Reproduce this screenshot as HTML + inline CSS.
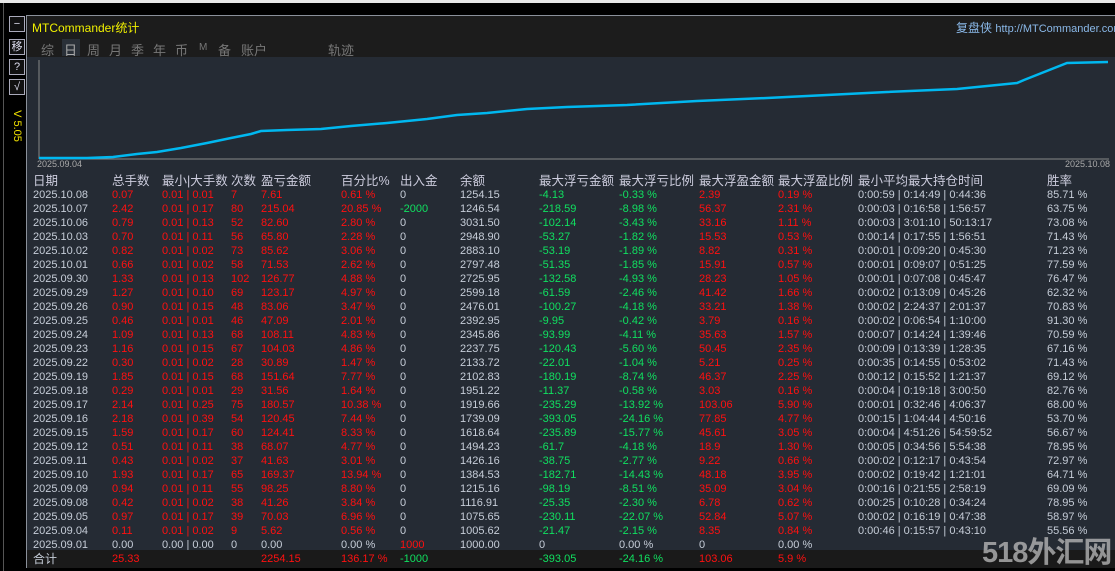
<!DOCTYPE html>
<html><head><meta charset="utf-8"><style>
body{margin:0;width:1115px;height:571px;background:#000;position:relative;overflow:hidden;font-family:"Liberation Sans","Noto Sans CJK SC",sans-serif;}
.topbar{position:absolute;left:0;top:0;width:1115px;height:3px;background:#e8e8e8}
.lline{position:absolute;left:3px;top:3px;width:1px;height:568px;background:#555}
.panel{position:absolute;left:26px;top:15px;width:1089px;height:552px;border-top:1px solid #8a909a;border-left:1px solid #8a909a;background:#252b34}
.title{position:absolute;left:0;top:0;width:1089px;height:41px;background:#1c1c1c}
.btn{position:absolute;left:9px;width:14px;height:14px;border:1px solid #aab;color:#dde;font-size:11px;line-height:14px;text-align:center;background:#111}
.t{position:absolute;white-space:nowrap}
.nv{position:absolute;top:24px;color:#777;font-size:13px;white-space:nowrap}
.row{position:absolute;left:0;height:14px;font-size:11px;line-height:14px;color:#c6cdd8;width:1089px}
.row span{position:absolute;white-space:nowrap}
.r{color:#ff1010}.g{color:#10e060}
.a{left:6px}.b{left:85px}.c{left:135px}.d{left:204px}.e{left:234px}.f{left:314px}.h{left:373px}.i{left:433px}.j{left:512px}.k{left:592px}.l{left:672px}.m{left:751px}.n{left:831px}.o{left:1020px}
.hd{font-size:12.5px;color:#ccd}
</style></head><body>
<div class="topbar"></div>
<div class="lline"></div>
<div class="btn" style="top:16px">−</div>
<div class="btn" style="top:39px">移</div>
<div class="btn" style="top:59px">?</div>
<div class="btn" style="top:79px">√</div>
<div class="t" style="left:1px;top:120px;color:#f0e000;font-size:11px;transform:rotate(90deg);transform-origin:center">V 5.05</div>
<div class="panel">
<div class="title"></div>
<div class="t" style="left:5px;top:3px;color:#f0f000;font-size:12px">MTCommander统计</div>
<div class="t" style="left:929px;top:3px;color:#8ab8e8;font-size:12px">复盘侠 <span style="font-size:11px">http://MTCommander.com</span></div>
<div class="t" style="left:35px;top:23px;width:18px;height:17px;background:#2a3038"></div>
<div class="nv" style="left:14px">综</div>
<div class="nv" style="left:37px;color:#aaa">日</div>
<div class="nv" style="left:60px">周</div>
<div class="nv" style="left:82px">月</div>
<div class="nv" style="left:104px">季</div>
<div class="nv" style="left:126px">年</div>
<div class="nv" style="left:148px">币</div>
<div class="nv" style="left:172px;font-size:10px;top:26px">M</div>
<div class="nv" style="left:191px">备</div>
<div class="nv" style="left:214px">账户</div>
<div class="nv" style="left:301px">轨迹</div>
<svg class="t" style="left:0;top:41px" width="1089" height="120">
<line x1="12" y1="3" x2="12" y2="102" stroke="#888" stroke-width="1"/>
<line x1="12" y1="102" x2="1082" y2="102" stroke="#888" stroke-width="1"/>
<polyline fill="none" stroke="#00b8f0" stroke-width="2.5" points="12,101 60,101 86,100 110,97 130,95 154,91 180,86 204,81 224,77 234,74 260,73 294,72 324,69 360,66 400,62 430,58 460,56 500,52 540,50 600,48 670,44 740,41 800,38 860,35 930,32 990,26 997,23 1040,6 1081,5"/>
</svg>
<div class="t" style="left:10px;top:143px;color:#aaa;font-size:9px">2025.09.04</div>
<div class="t" style="left:1038px;top:143px;color:#aaa;font-size:9px">2025.10.08</div>
<div class="row hd" style="top:158px"><span class="a">日期</span><span class="b">总手数</span><span class="c">最小|大手数</span><span class="d">次数</span><span class="e">盈亏金额</span><span class="f">百分比%</span><span class="h">出入金</span><span class="i">余额</span><span class="j">最大浮亏金额</span><span class="k">最大浮亏比例</span><span class="l">最大浮盈金额</span><span class="m">最大浮盈比例</span><span class="n">最小平均最大持仓时间</span><span class="o">胜率</span></div>

<div class="row" style="top:172px"><span class="a">2025.10.08</span><span class="b r">0.07</span><span class="c r">0.01 | 0.01</span><span class="d r">7</span><span class="e r">7.61</span><span class="f r">0.61 %</span><span class="h">0</span><span class="i">1254.15</span><span class="j g">-4.13</span><span class="k g">-0.33 %</span><span class="l r">2.39</span><span class="m r">0.19 %</span><span class="n">0:00:59 | 0:14:49 | 0:44:36</span><span class="o">85.71 %</span></div>
<div class="row" style="top:186px"><span class="a">2025.10.07</span><span class="b r">2.42</span><span class="c r">0.01 | 0.17</span><span class="d r">80</span><span class="e r">215.04</span><span class="f r">20.85 %</span><span class="h g">-2000</span><span class="i">1246.54</span><span class="j g">-218.59</span><span class="k g">-8.98 %</span><span class="l r">56.37</span><span class="m r">2.31 %</span><span class="n">0:00:03 | 0:16:58 | 1:56:57</span><span class="o">63.75 %</span></div>
<div class="row" style="top:200px"><span class="a">2025.10.06</span><span class="b r">0.79</span><span class="c r">0.01 | 0.13</span><span class="d r">52</span><span class="e r">82.60</span><span class="f r">2.80 %</span><span class="h">0</span><span class="i">3031.50</span><span class="j g">-102.14</span><span class="k g">-3.43 %</span><span class="l r">33.16</span><span class="m r">1.11 %</span><span class="n">0:00:03 | 3:01:10 | 50:13:17</span><span class="o">73.08 %</span></div>
<div class="row" style="top:214px"><span class="a">2025.10.03</span><span class="b r">0.70</span><span class="c r">0.01 | 0.11</span><span class="d r">56</span><span class="e r">65.80</span><span class="f r">2.28 %</span><span class="h">0</span><span class="i">2948.90</span><span class="j g">-53.27</span><span class="k g">-1.82 %</span><span class="l r">15.53</span><span class="m r">0.53 %</span><span class="n">0:00:14 | 0:17:55 | 1:56:51</span><span class="o">71.43 %</span></div>
<div class="row" style="top:228px"><span class="a">2025.10.02</span><span class="b r">0.82</span><span class="c r">0.01 | 0.02</span><span class="d r">73</span><span class="e r">85.62</span><span class="f r">3.06 %</span><span class="h">0</span><span class="i">2883.10</span><span class="j g">-53.19</span><span class="k g">-1.89 %</span><span class="l r">8.82</span><span class="m r">0.31 %</span><span class="n">0:00:01 | 0:09:20 | 0:45:30</span><span class="o">71.23 %</span></div>
<div class="row" style="top:242px"><span class="a">2025.10.01</span><span class="b r">0.66</span><span class="c r">0.01 | 0.02</span><span class="d r">58</span><span class="e r">71.53</span><span class="f r">2.62 %</span><span class="h">0</span><span class="i">2797.48</span><span class="j g">-51.35</span><span class="k g">-1.85 %</span><span class="l r">15.91</span><span class="m r">0.57 %</span><span class="n">0:00:01 | 0:09:07 | 0:51:25</span><span class="o">77.59 %</span></div>
<div class="row" style="top:256px"><span class="a">2025.09.30</span><span class="b r">1.33</span><span class="c r">0.01 | 0.13</span><span class="d r">102</span><span class="e r">126.77</span><span class="f r">4.88 %</span><span class="h">0</span><span class="i">2725.95</span><span class="j g">-132.58</span><span class="k g">-4.93 %</span><span class="l r">28.23</span><span class="m r">1.05 %</span><span class="n">0:00:01 | 0:07:08 | 0:45:47</span><span class="o">76.47 %</span></div>
<div class="row" style="top:270px"><span class="a">2025.09.29</span><span class="b r">1.27</span><span class="c r">0.01 | 0.10</span><span class="d r">69</span><span class="e r">123.17</span><span class="f r">4.97 %</span><span class="h">0</span><span class="i">2599.18</span><span class="j g">-61.59</span><span class="k g">-2.46 %</span><span class="l r">41.42</span><span class="m r">1.66 %</span><span class="n">0:00:02 | 0:13:09 | 0:45:26</span><span class="o">62.32 %</span></div>
<div class="row" style="top:284px"><span class="a">2025.09.26</span><span class="b r">0.90</span><span class="c r">0.01 | 0.15</span><span class="d r">48</span><span class="e r">83.06</span><span class="f r">3.47 %</span><span class="h">0</span><span class="i">2476.01</span><span class="j g">-100.27</span><span class="k g">-4.18 %</span><span class="l r">33.21</span><span class="m r">1.38 %</span><span class="n">0:00:02 | 2:24:37 | 2:01:37</span><span class="o">70.83 %</span></div>
<div class="row" style="top:298px"><span class="a">2025.09.25</span><span class="b r">0.46</span><span class="c r">0.01 | 0.01</span><span class="d r">46</span><span class="e r">47.09</span><span class="f r">2.01 %</span><span class="h">0</span><span class="i">2392.95</span><span class="j g">-9.95</span><span class="k g">-0.42 %</span><span class="l r">3.79</span><span class="m r">0.16 %</span><span class="n">0:00:02 | 0:06:54 | 1:10:00</span><span class="o">91.30 %</span></div>
<div class="row" style="top:312px"><span class="a">2025.09.24</span><span class="b r">1.09</span><span class="c r">0.01 | 0.13</span><span class="d r">68</span><span class="e r">108.11</span><span class="f r">4.83 %</span><span class="h">0</span><span class="i">2345.86</span><span class="j g">-93.99</span><span class="k g">-4.11 %</span><span class="l r">35.63</span><span class="m r">1.57 %</span><span class="n">0:00:07 | 0:14:24 | 1:39:46</span><span class="o">70.59 %</span></div>
<div class="row" style="top:326px"><span class="a">2025.09.23</span><span class="b r">1.16</span><span class="c r">0.01 | 0.15</span><span class="d r">67</span><span class="e r">104.03</span><span class="f r">4.86 %</span><span class="h">0</span><span class="i">2237.75</span><span class="j g">-120.43</span><span class="k g">-5.60 %</span><span class="l r">50.45</span><span class="m r">2.35 %</span><span class="n">0:00:09 | 0:13:39 | 1:28:35</span><span class="o">67.16 %</span></div>
<div class="row" style="top:340px"><span class="a">2025.09.22</span><span class="b r">0.30</span><span class="c r">0.01 | 0.02</span><span class="d r">28</span><span class="e r">30.89</span><span class="f r">1.47 %</span><span class="h">0</span><span class="i">2133.72</span><span class="j g">-22.01</span><span class="k g">-1.04 %</span><span class="l r">5.21</span><span class="m r">0.25 %</span><span class="n">0:00:35 | 0:14:55 | 0:53:02</span><span class="o">71.43 %</span></div>
<div class="row" style="top:354px"><span class="a">2025.09.19</span><span class="b r">1.85</span><span class="c r">0.01 | 0.15</span><span class="d r">68</span><span class="e r">151.64</span><span class="f r">7.77 %</span><span class="h">0</span><span class="i">2102.83</span><span class="j g">-180.19</span><span class="k g">-8.74 %</span><span class="l r">46.37</span><span class="m r">2.25 %</span><span class="n">0:00:12 | 0:15:52 | 1:21:37</span><span class="o">69.12 %</span></div>
<div class="row" style="top:368px"><span class="a">2025.09.18</span><span class="b r">0.29</span><span class="c r">0.01 | 0.01</span><span class="d r">29</span><span class="e r">31.56</span><span class="f r">1.64 %</span><span class="h">0</span><span class="i">1951.22</span><span class="j g">-11.37</span><span class="k g">-0.58 %</span><span class="l r">3.03</span><span class="m r">0.16 %</span><span class="n">0:00:04 | 0:19:18 | 3:00:50</span><span class="o">82.76 %</span></div>
<div class="row" style="top:382px"><span class="a">2025.09.17</span><span class="b r">2.14</span><span class="c r">0.01 | 0.25</span><span class="d r">75</span><span class="e r">180.57</span><span class="f r">10.38 %</span><span class="h">0</span><span class="i">1919.66</span><span class="j g">-235.29</span><span class="k g">-13.92 %</span><span class="l r">103.06</span><span class="m r">5.90 %</span><span class="n">0:00:01 | 0:32:46 | 4:06:37</span><span class="o">68.00 %</span></div>
<div class="row" style="top:396px"><span class="a">2025.09.16</span><span class="b r">2.18</span><span class="c r">0.01 | 0.39</span><span class="d r">54</span><span class="e r">120.45</span><span class="f r">7.44 %</span><span class="h">0</span><span class="i">1739.09</span><span class="j g">-393.05</span><span class="k g">-24.16 %</span><span class="l r">77.85</span><span class="m r">4.77 %</span><span class="n">0:00:15 | 1:04:44 | 4:50:16</span><span class="o">53.70 %</span></div>
<div class="row" style="top:410px"><span class="a">2025.09.15</span><span class="b r">1.59</span><span class="c r">0.01 | 0.17</span><span class="d r">60</span><span class="e r">124.41</span><span class="f r">8.33 %</span><span class="h">0</span><span class="i">1618.64</span><span class="j g">-235.89</span><span class="k g">-15.77 %</span><span class="l r">45.61</span><span class="m r">3.05 %</span><span class="n">0:00:04 | 4:51:26 | 54:59:52</span><span class="o">56.67 %</span></div>
<div class="row" style="top:424px"><span class="a">2025.09.12</span><span class="b r">0.51</span><span class="c r">0.01 | 0.11</span><span class="d r">38</span><span class="e r">68.07</span><span class="f r">4.77 %</span><span class="h">0</span><span class="i">1494.23</span><span class="j g">-61.7</span><span class="k g">-4.18 %</span><span class="l r">18.9</span><span class="m r">1.30 %</span><span class="n">0:00:05 | 0:34:56 | 5:54:38</span><span class="o">78.95 %</span></div>
<div class="row" style="top:438px"><span class="a">2025.09.11</span><span class="b r">0.43</span><span class="c r">0.01 | 0.02</span><span class="d r">37</span><span class="e r">41.63</span><span class="f r">3.01 %</span><span class="h">0</span><span class="i">1426.16</span><span class="j g">-38.75</span><span class="k g">-2.77 %</span><span class="l r">9.22</span><span class="m r">0.66 %</span><span class="n">0:00:02 | 0:12:17 | 0:43:54</span><span class="o">72.97 %</span></div>
<div class="row" style="top:452px"><span class="a">2025.09.10</span><span class="b r">1.93</span><span class="c r">0.01 | 0.17</span><span class="d r">65</span><span class="e r">169.37</span><span class="f r">13.94 %</span><span class="h">0</span><span class="i">1384.53</span><span class="j g">-182.71</span><span class="k g">-14.43 %</span><span class="l r">48.18</span><span class="m r">3.95 %</span><span class="n">0:00:02 | 0:19:42 | 1:21:01</span><span class="o">64.71 %</span></div>
<div class="row" style="top:466px"><span class="a">2025.09.09</span><span class="b r">0.94</span><span class="c r">0.01 | 0.11</span><span class="d r">55</span><span class="e r">98.25</span><span class="f r">8.80 %</span><span class="h">0</span><span class="i">1215.16</span><span class="j g">-98.19</span><span class="k g">-8.51 %</span><span class="l r">35.09</span><span class="m r">3.04 %</span><span class="n">0:00:16 | 0:21:55 | 2:58:19</span><span class="o">69.09 %</span></div>
<div class="row" style="top:480px"><span class="a">2025.09.08</span><span class="b r">0.42</span><span class="c r">0.01 | 0.02</span><span class="d r">38</span><span class="e r">41.26</span><span class="f r">3.84 %</span><span class="h">0</span><span class="i">1116.91</span><span class="j g">-25.35</span><span class="k g">-2.30 %</span><span class="l r">6.78</span><span class="m r">0.62 %</span><span class="n">0:00:25 | 0:10:28 | 0:34:24</span><span class="o">78.95 %</span></div>
<div class="row" style="top:494px"><span class="a">2025.09.05</span><span class="b r">0.97</span><span class="c r">0.01 | 0.17</span><span class="d r">39</span><span class="e r">70.03</span><span class="f r">6.96 %</span><span class="h">0</span><span class="i">1075.65</span><span class="j g">-230.11</span><span class="k g">-22.07 %</span><span class="l r">52.84</span><span class="m r">5.07 %</span><span class="n">0:00:02 | 0:16:19 | 0:47:38</span><span class="o">58.97 %</span></div>
<div class="row" style="top:508px"><span class="a">2025.09.04</span><span class="b r">0.11</span><span class="c r">0.01 | 0.02</span><span class="d r">9</span><span class="e r">5.62</span><span class="f r">0.56 %</span><span class="h">0</span><span class="i">1005.62</span><span class="j g">-21.47</span><span class="k g">-2.15 %</span><span class="l r">8.35</span><span class="m r">0.84 %</span><span class="n">0:00:46 | 0:15:57 | 0:43:10</span><span class="o">55.56 %</span></div>
<div class="row" style="top:522px"><span class="a">2025.09.01</span><span class="b">0.00</span><span class="c">0.00 | 0.00</span><span class="d">0</span><span class="e">0.00</span><span class="f">0.00 %</span><span class="h r">1000</span><span class="i">1000.00</span><span class="j">0</span><span class="k">0.00 %</span><span class="l">0</span><span class="m">0.00 %</span></div>
<div class="t" style="left:0;top:534px;width:1089px;height:18px;background:#1a1a1a"></div>
<div class="row" style="top:536px"><span class="a" style="font-size:12px">合计</span><span class="b r">25.33</span><span class="e r">2254.15</span><span class="f r">136.17 %</span><span class="h g">-1000</span><span class="j g">-393.05</span><span class="k g">-24.16 %</span><span class="l r">103.06</span><span class="m r">5.9 %</span></div>
<div class="t" style="left:955px;top:513px;color:rgba(190,190,190,0.75);font-size:29px;font-weight:bold;letter-spacing:-1px">518外汇网</div>
</div>
</body></html>
